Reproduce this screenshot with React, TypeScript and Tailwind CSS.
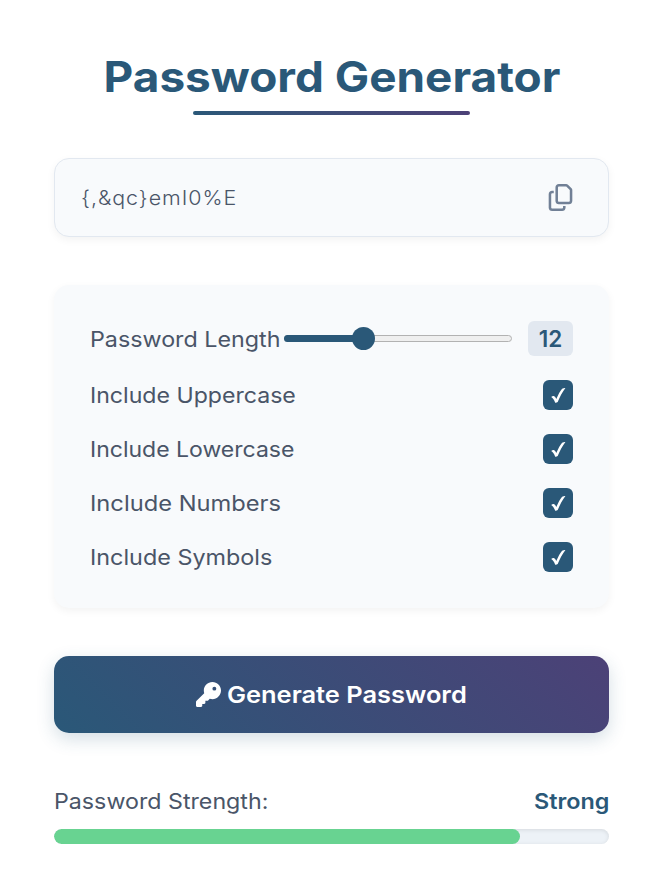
import { useState } from "react";
import { FaKey, FaRegCopy } from "react-icons/fa6";

type OptionName = "Uppercase" | "Lowercase" | "Numbers" | "Symbols";

const options: { name: OptionName; stretch: string }[] = [
  { name: "Uppercase", stretch: "scale-x-[1.075]" },
  { name: "Lowercase", stretch: "scale-x-[1.070]" },
  { name: "Numbers", stretch: "scale-x-[1.102]" },
  { name: "Symbols", stretch: "scale-x-[1.087]" },
];

function CheckBox({ checked, onToggle, label }: { checked: boolean; onToggle: () => void; label: string }) {
  return (
    <button
      type="button"
      role="checkbox"
      aria-checked={checked}
      aria-label={label}
      onClick={onToggle}
      className="flex size-[30px] items-center justify-center rounded-[6px] bg-[#2a5878]"
    >
      {checked && (
        <svg viewBox="0 0 30 30" className="size-[30px]" fill="#ffffff">
          <path d="M8.200 17.100C9 16.200 10 15.800 10.800 16C11.900 16.300 12.600 17.500 13.300 19C15.200 14.600 17.100 10.900 19.100 8.700C20 8 21.200 7.900 22.400 7.900C19.300 11.900 16.900 16.700 14.700 22.100C14 22.600 13.100 22.800 12.200 22.700C11.200 20.300 10 18.200 8.200 17.100Z" />
        </svg>
      )}
    </button>
  );
}

export default function App() {
  const [enabled, setEnabled] = useState<Record<OptionName, boolean>>({
    Uppercase: true,
    Lowercase: true,
    Numbers: true,
    Symbols: true,
  });

  return (
    <main className="h-[889px] overflow-hidden bg-white pr-[51px] pl-[54px] pt-[50px] font-['Inter',sans-serif] text-[21.5px] text-[#4a5568]">
      <header className="flex flex-col items-center">
        <h1 className="h-[61px] scale-x-[1.093] text-[42px] leading-[54px] font-bold whitespace-nowrap text-[#2a5878]">
          Password Generator
        </h1>
        <div className="h-1 w-[277px] rounded-full bg-linear-to-r from-[#2a5878] to-[#4c4177]" />
      </header>

      <section className="mt-[43px] flex h-[79px] items-center justify-between rounded-[15px] border border-[#e2e8f0] bg-[#f8fafc] pr-[34px] pl-[26px] shadow-[0_3px_8px_rgba(0,0,0,0.05)]">
        <span className="origin-left scale-x-[1.072] text-[20px] font-light tracking-[0.9px]">{"{,&qc}emI0%E"}</span>
        <FaRegCopy className="size-[27px] text-[#718096]" />
      </section>

      <section className="mt-12 h-[323px] rounded-[15px] bg-[#f8fafc] px-9 pt-9 shadow-[0_3px_8px_rgba(0,0,0,0.05)]">
        <div className="flex h-[35px] items-center">
          <div className="w-[194px] pt-0.5">
            <span className="inline-block origin-left scale-x-[1.083] whitespace-nowrap">Password Length</span>
          </div>
          <div className="flex h-[7px] w-[228px] items-center rounded-full border border-[#b2b2b2] bg-[#efefef]">
            <div className="-ml-px h-[7px] w-[70px] shrink-0 rounded-l-full bg-[#2a5878]" />
            <div className="-ml-[2px] size-[23px] shrink-0 rounded-full bg-[#2a5878]" />
          </div>
          <div className="ml-4 flex h-[35px] w-[45px] items-center justify-center rounded-[6px] bg-[#e2e8f0] text-[22.500px] font-semibold text-[#2a5878]">
            12
          </div>
        </div>
        <div className="mt-6 flex flex-col gap-6">
          {options.map(({ name, stretch }) => (
            <div key={name} className="flex h-[30px] items-center justify-between">
              <span className={`origin-left ${stretch}`}>Include {name}</span>
              <CheckBox
                label={name}
                checked={enabled[name]}
                onToggle={() => setEnabled({ ...enabled, [name]: !enabled[name] })}
              />
            </div>
          ))}
        </div>
      </section>

      <button
        type="button"
        className="mt-12 flex h-[77px] w-full items-center justify-center rounded-[15px] bg-[linear-gradient(45deg,#2a5878,#4c4177)] pr-[2px] text-[23px] font-semibold text-white shadow-[0_6px_18px_rgba(42,88,120,0.2)]"
      >
        <FaKey className="mr-[6px] size-[25px]" />
        <span className="w-[239px] origin-left scale-x-[1.105] pt-0.5 text-left whitespace-nowrap">Generate Password</span>
      </button>

      <section className="mt-[52px]">
        <div className="flex h-[33px] items-center justify-between">
          <span className="origin-left scale-x-[1.080]">Password Strength:</span>
          <span className="origin-right scale-x-[1.087] font-semibold text-[#2a5878]">Strong</span>
        </div>
        <div className="mt-[11px] h-[15px] overflow-hidden rounded-full bg-[#edf2f7] shadow-[inset_0_1px_4px_rgba(0,0,0,0.1)]">
          <div className="h-full w-[466px] rounded-full bg-[#68d391]" />
        </div>
      </section>
    </main>
  );
}
